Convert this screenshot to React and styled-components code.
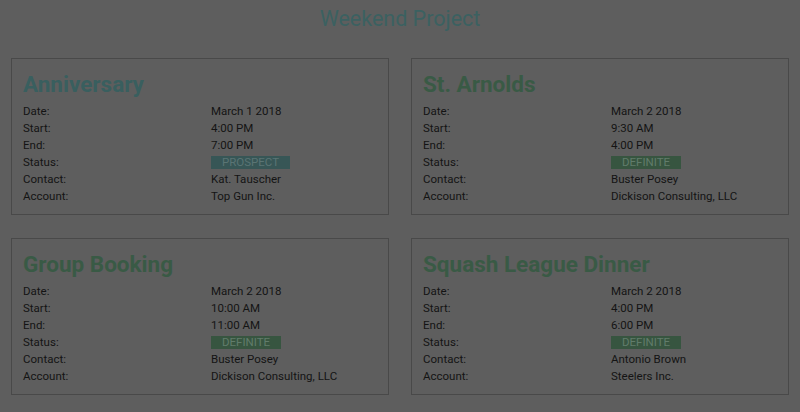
import React from "react";
import styled, { createGlobalStyle } from "styled-components";

const Global = createGlobalStyle`
  html, body { margin: 0; padding: 0; background: #5e5e5e; }
  body { font-family: Roboto, "Liberation Sans", sans-serif; }
`;

const Page = styled.div`
  background: #5e5e5e;
  min-height: 412px;
  padding: 4px 11px 0 11px;
  box-sizing: border-box;
`;

const Heading = styled.h1`
  margin: 0 0 24px 0;
  text-align: center;
  font-size: 21.5px;
  font-weight: 400;
  line-height: 30px;
  color: #3b6161;
`;

const Grid = styled.div`
  display: grid;
  grid-template-columns: 378px 378px;
  column-gap: 22px;
  row-gap: 23px;
`;

const Card = styled.section`
  border: 1px solid #494949;
  padding: 10px 11px 12px 11px;
  height: 157px;
  box-sizing: border-box;
`;

const Title = styled.h2`
  margin: 0 0 4px 0;
  font-size: 22.5px;
  font-weight: 700;
  line-height: 30px;
  color: ${(p) => (p.$tone === "prospect" ? "#395f5f" : "#395a45")};
`;

const Rows = styled.div`
  display: grid;
  grid-template-columns: 188px 1fr;
  grid-auto-rows: 17px;
  font-size: 11.5px;
  line-height: 17px;
  color: #141414;
`;

const Badge = styled.span`
  display: inline-block;
  align-self: center;
  justify-self: start;
  height: 13px;
  line-height: 13px;
  padding: 0 11px;
  font-size: 11.5px;
  background: ${(p) => (p.$tone === "prospect" ? "#375656" : "#375540")};
  color: ${(p) => (p.$tone === "prospect" ? "#5a7474" : "#617c6b")};
`;

const events = [
  { title: "Anniversary", date: "March 1 2018", start: "4:00 PM", end: "7:00 PM", status: "prospect", contact: "Kat. Tauscher", account: "Top Gun Inc." },
  { title: "St. Arnolds", date: "March 2 2018", start: "9:30 AM", end: "4:00 PM", status: "definite", contact: "Buster Posey", account: "Dickison Consulting, LLC" },
  { title: "Group Booking", date: "March 2 2018", start: "10:00 AM", end: "11:00 AM", status: "definite", contact: "Buster Posey", account: "Dickison Consulting, LLC" },
  { title: "Squash League Dinner", date: "March 2 2018", start: "4:00 PM", end: "6:00 PM", status: "definite", contact: "Antonio Brown", account: "Steelers Inc." },
];

export default function App() {
  return (
    <Page>
      <Global />
      <Heading>Weekend Project</Heading>
      <Grid>
        {events.map((e) => (
          <Card key={e.title}>
            <Title $tone={e.status}>{e.title}</Title>
            <Rows>
              <span>Date:</span><span>{e.date}</span>
              <span>Start:</span><span>{e.start}</span>
              <span>End:</span><span>{e.end}</span>
              <span>Status:</span><Badge $tone={e.status}>{e.status.toUpperCase()}</Badge>
              <span>Contact:</span><span>{e.contact}</span>
              <span>Account:</span><span>{e.account}</span>
            </Rows>
          </Card>
        ))}
      </Grid>
    </Page>
  );
}
